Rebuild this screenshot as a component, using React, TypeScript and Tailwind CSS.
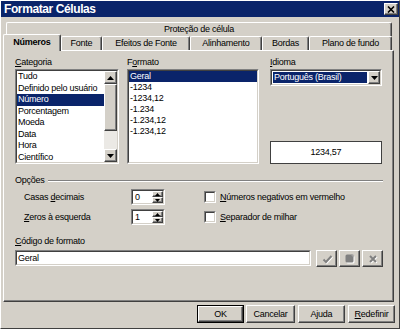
import React from 'react'

// estilos 3D do Windows clássico
const raised =
  'border border-t-white border-l-white border-r-[#404040] border-b-[#404040] shadow-[inset_-1px_-1px_0_#808080] bg-[#d4d0c8]'

function Sunken({ className = '', children }: { className?: string; children?: React.ReactNode }) {
  return (
    <div className={`border border-t-[#808080] border-l-[#808080] border-r-white border-b-white ${className}`}>
      <div className="h-full w-full border border-t-[#404040] border-l-[#404040] border-r-[#d4d0c8] border-b-[#d4d0c8] bg-white flex overflow-hidden">
        {children}
      </div>
    </div>
  )
}

function Arrow({ up = false, small = false }: { up?: boolean; small?: boolean }) {
  const w = small ? 5 : 7
  const h = small ? 3 : 4
  const pts = up ? `0,${h} ${w / 2},0 ${w},${h}` : `0,0 ${w / 2},${h} ${w},0`
  return (
    <svg width={w} height={h} viewBox={`0 0 ${w} ${h}`}>
      <polygon points={pts} fill="#000" />
    </svg>
  )
}

function Spinner({ value }: { value: string }) {
  return (
    <Sunken className="w-[34px] h-[16px]">
      <div className="flex-1 pl-[2px] leading-[12px]">{value}</div>
      <div className="w-[11px] flex flex-col">
        <div className={`h-[6px] flex items-center justify-center ${raised}`}>
          <Arrow up small />
        </div>
        <div className={`h-[6px] flex items-center justify-center ${raised}`}>
          <Arrow small />
        </div>
      </div>
    </Sunken>
  )
}

function Checkbox({ children }: { children: React.ReactNode }) {
  return (
    <div className="flex items-center">
      <Sunken className="w-[12px] h-[12px]" />
      <span className="ml-[4px]">{children}</span>
    </div>
  )
}

function ToolButton({ kind }: { kind: 'ok' | 'note' | 'x' }) {
  return (
    <div className={`w-[21px] h-[17px] flex items-center justify-center ${raised}`}>
      <svg width="12" height="12" viewBox="0 0 12 12">
        {kind === 'ok' && (
          <>
            <path d="M2.5 6.5 L5 9 L10.5 3" stroke="#fff" strokeWidth="2" fill="none" transform="translate(0.8 0.8)" />
            <path d="M2.5 6.5 L5 9 L10.5 3" stroke="#808080" strokeWidth="2" fill="none" />
          </>
        )}
        {kind === 'note' && (
          <>
            <rect x="2.5" y="2.5" width="8" height="8" rx="1.5" fill="#fff" />
            <rect x="1.5" y="1.5" width="8" height="8" rx="1.5" fill="#808080" />
            <path d="M6.5 1.5 L9.5 4.5 L9.5 1.5 Z" fill="#a0a0a0" />
          </>
        )}
        {kind === 'x' && (
          <>
            <path d="M3 3 L9 9 M9 3 L3 9" stroke="#fff" strokeWidth="2" transform="translate(0.8 0.8)" />
            <path d="M3 3 L9 9 M9 3 L3 9" stroke="#808080" strokeWidth="2" />
          </>
        )}
      </svg>
    </div>
  )
}

export default function App() {
  const tabs = [
    { label: 'Números', w: 'w-[58px]', active: true },
    { label: 'Fonte', w: 'w-[41px]' },
    { label: 'Efeitos de Fonte', w: 'w-[88px]' },
    { label: 'Alinhamento', w: 'w-[72px]' },
    { label: 'Bordas', w: 'w-[47px]' },
    { label: 'Plano de fundo', w: 'w-[83px]' },
  ]

  const categorias = ['Tudo', 'Definido pelo usuário', 'Número', 'Porcentagem', 'Moeda', 'Data', 'Hora', 'Científico']
  const formatos = ['Geral', '-1234', '-1234,12', '-1.234', '-1.234,12', '-1.234,12']

  return (
    <div className="w-[400px] h-[329px] bg-[#d4d0c8] border border-t-white border-l-white border-r-[#404040] border-b-[#404040] flex flex-col font-['Liberation_Sans',Arial,sans-serif] text-[9px] tracking-[-0.25px] text-black leading-[11px] overflow-hidden">
      {/* barra de título */}
      <div className="h-[16px] bg-[#0a246a] flex items-center justify-between pl-[3px] pr-[1px]">
        <span className="text-white font-bold text-[12px] tracking-[-0.4px] leading-[16px]">Formatar Células</span>
        <div className={`w-[14px] h-[12px] flex items-center justify-center ${raised}`}>
          <svg width="8" height="7" viewBox="0 0 8 7">
            <path d="M1 0.5 L7 6.5 M7 0.5 L1 6.5" stroke="#000" strokeWidth="1.6" />
          </svg>
        </div>
      </div>

      {/* abas */}
      <div className="mt-[5px] ml-[5px] w-[386px] h-[14px] border border-b-0 border-t-white border-l-white border-r-[#404040] rounded-t-[2px] shadow-[inset_-1px_0_0_#808080] flex items-center justify-center">
        Proteção de célula
      </div>
      <div className="flex items-end h-[14px] ml-[2px]">
        {tabs.map((t) =>
          t.active ? (
            <div
              key={t.label}
              className={`${t.w} relative z-10 -mb-[1px] h-[17px] bg-[#d4d0c8] font-bold border border-b-0 border-t-white border-l-white border-r-[#404040] rounded-t-[2px] shadow-[inset_-1px_0_0_#808080] flex items-center justify-center pb-[1px]`}
            >
              {t.label}
            </div>
          ) : (
            <div
              key={t.label}
              className={`${t.w} h-[14px] border border-b-0 border-t-white border-l-white border-r-[#404040] rounded-t-[2px] shadow-[inset_-1px_0_0_#808080] flex items-center justify-center`}
            >
              {t.label}
            </div>
          )
        )}
      </div>

      {/* painel */}
      <div className={`ml-[2px] w-[391px] h-[252px] ${raised} flex flex-col pl-[11px] pr-[10px]`}>
        <div className="mt-[6px] flex">
          <div className="w-[104px] flex flex-col">
            <div className="h-[11px]"><u>C</u>ategoria</div>
            <Sunken className="mt-[1px] h-[95px]">
              <div className="flex-1 flex flex-col">
                {categorias.map((c) => (
                  <div
                    key={c}
                    className={`h-[11.5px] shrink-0 leading-[11.5px] pl-[1px] whitespace-nowrap ${c === 'Número' ? 'bg-[#0a246a] text-white' : ''}`}
                  >
                    {c}
                  </div>
                ))}
              </div>
              <div className="w-[13px] flex flex-col">
                <div className={`h-[13px] shrink-0 flex items-center justify-center ${raised}`}>
                  <Arrow up />
                </div>
                <div className={`h-[47px] shrink-0 ${raised}`} />
                <div className="flex-1 bg-[#ebe9e5]" />
                <div className={`h-[13px] shrink-0 flex items-center justify-center ${raised}`}>
                  <Arrow />
                </div>
              </div>
            </Sunken>
          </div>

          <div className="ml-[8px] w-[132px] flex flex-col">
            <div className="h-[11px]">F<u>o</u>rmato</div>
            <Sunken className="mt-[1px] h-[95px]">
              <div className="flex-1 flex flex-col">
                {formatos.map((f, i) => (
                  <div
                    key={i}
                    className={`h-[11px] shrink-0 pl-[1px] ${i === 0 ? 'bg-[#0a246a] text-white' : ''}`}
                  >
                    {f}
                  </div>
                ))}
              </div>
            </Sunken>
          </div>

          <div className="ml-[11px] w-[112px] flex flex-col">
            <div className="h-[11px]"><u>I</u>dioma</div>
            <Sunken className="mt-[1px] h-[17px]">
              <div className="flex-1 m-[1px] bg-[#0a246a] text-white leading-[11px] pl-[1px]">Português (Brasil)</div>
              <div className={`w-[12px] flex items-center justify-center ${raised}`}>
                <Arrow />
              </div>
            </Sunken>
            <div className="mt-auto h-[23px] border border-[#404040] bg-white flex items-center justify-center">
              1234,57
            </div>
          </div>
        </div>

        {/* opções */}
        <div className="mt-[11px] h-[11px] flex items-center">
          <span>Opções</span>
          <div className="flex-1 ml-[3px] h-[2px] border-t border-t-[#808080] border-b border-b-white" />
        </div>

        <div className="mt-[3px] flex flex-col gap-[4px]">
          <div className="h-[16px] flex items-center">
            <div className="w-[116px] pl-[9px]">Casas <u>d</u>ecimais</div>
            <Spinner value="0" />
            <div className="ml-[39px]">
              <Checkbox><u>N</u>úmeros negativos em vermelho</Checkbox>
            </div>
          </div>
          <div className="h-[16px] flex items-center">
            <div className="w-[116px] pl-[9px]"><u>Z</u>eros à esquerda</div>
            <Spinner value="1" />
            <div className="ml-[39px]">
              <Checkbox><u>S</u>eparador de milhar</Checkbox>
            </div>
          </div>
        </div>

        {/* código de formato */}
        <div className="mt-[11px] h-[11px]"><u>C</u>ódigo de formato</div>
        <div className="mt-[3px] flex items-start">
          <Sunken className="w-[296px] h-[16px]">
            <div className="pl-[1px] leading-[12px]">Geral</div>
          </Sunken>
          <div className="ml-[5px] flex gap-[2px]">
            <ToolButton kind="ok" />
            <ToolButton kind="note" />
            <ToolButton kind="x" />
          </div>
        </div>
      </div>

      {/* botões */}
      <div className="mt-[3px] flex justify-end pr-[4px]">
        <div className="w-[47px] h-[18px] border border-black flex">
          <div className={`flex-1 flex items-center justify-center ${raised}`}>OK</div>
        </div>
        <div className={`ml-[2px] w-[49px] h-[18px] flex items-center justify-center ${raised}`}>Cancelar</div>
        <div className={`ml-[3px] w-[47px] h-[18px] flex items-center justify-center ${raised}`}>
          A<u>j</u>uda
        </div>
        <div className={`ml-[3px] w-[47px] h-[18px] flex items-center justify-center ${raised}`}>
          <u>R</u>edefinir
        </div>
      </div>
    </div>
  )
}
